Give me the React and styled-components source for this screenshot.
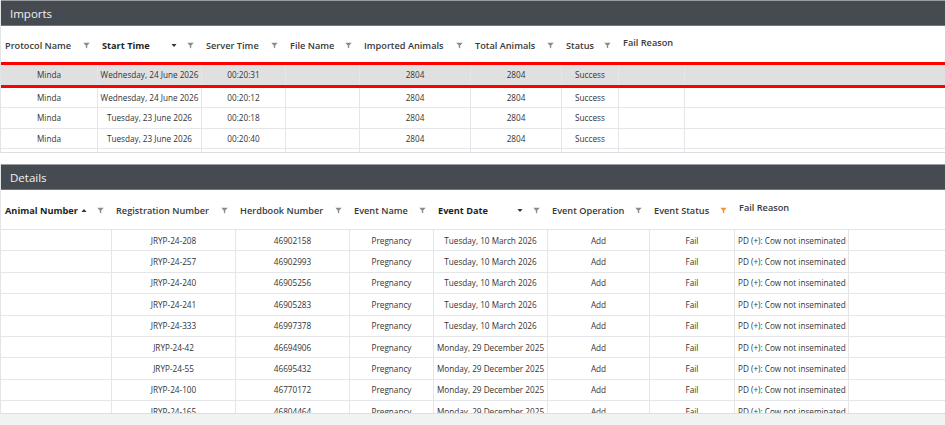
import React from "react";
import styled, { createGlobalStyle } from "styled-components";

const GlobalStyle = createGlobalStyle`
  html, body {
    margin: 0;
    padding: 0;
    background: #f1f3f3;
    font-family: "Open Sans", "Noto Sans", sans-serif;
  }
`;

const importColumns = [
  { title: "Protocol Name", width: 97 },
  { title: "Start Time", width: 104, sort: "desc", strong: true },
  { title: "Server Time", width: 84 },
  { title: "File Name", width: 74 },
  { title: "Imported Animals", width: 111 },
  { title: "Total Animals", width: 91 },
  { title: "Status", width: 57 },
  { title: "Fail Reason", width: 66, noFilter: true },
];

const importRows = [
  ["Minda", "Wednesday, 24 June 2026", "00:20:31", "", "2804", "2804", "Success", ""],
  ["Minda", "Wednesday, 24 June 2026", "00:20:12", "", "2804", "2804", "Success", ""],
  ["Minda", "Tuesday, 23 June 2026", "00:20:18", "", "2804", "2804", "Success", ""],
  ["Minda", "Tuesday, 23 June 2026", "00:20:40", "", "2804", "2804", "Success", ""],
  ["", "", "", "", "", "", "", ""],
];

const detailColumns = [
  { title: "Animal Number", width: 111, sort: "asc", strong: true },
  { title: "Registration Number", width: 124 },
  { title: "Herdbook Number", width: 114 },
  { title: "Event Name", width: 84 },
  { title: "Event Date", width: 114, sort: "desc", strong: true },
  { title: "Event Operation", width: 102 },
  { title: "Event Status", width: 85, active: true },
  { title: "Fail Reason", width: 114, noFilter: true, left: true },
];

const march = "Tuesday, 10 March 2026";
const december = "Monday, 29 December 2025";
const reason = "PD (+): Cow not inseminated";

const detailRows = [
  ["JRYP-24-208", "46902158", march],
  ["JRYP-24-257", "46902993", march],
  ["JRYP-24-240", "46905256", march],
  ["JRYP-24-241", "46905283", march],
  ["JRYP-24-333", "46997378", march],
  ["JRYP-24-42", "46694906", december],
  ["JRYP-24-55", "46695432", december],
  ["JRYP-24-100", "46770172", december],
  ["JRYP-24-165", "46804464", december],
].map(([reg, herd, date]) => ["", reg, herd, "Pregnancy", date, "Add", "Fail", reason]);

const FilterIcon = ({ active }) => (
  <svg width="7" height="7" viewBox="0 0 7 7">
    <path d="M0.3 0.8h6.4L4.2 3.6V6.4L2.8 5.6V3.6z" fill={active ? "#f7941d" : "#8a8a8a"} />
  </svg>
);

const SortIcon = ({ dir }) => (
  <svg width="6" height="5" viewBox="0 0 6 5">
    <path d={dir === "asc" ? "M0.5 4L3 1L5.5 4z" : "M0.5 1L5.5 1L3 4z"} fill="#333" />
  </svg>
);

const DataGrid = ({ title, columns, rows, headerHeight, rowHeight, bodyHeight, selected }) => {
  const template = columns.map((c) => `${c.width}px`).join(" ") + " 1fr";
  return (
    <Panel>
      <TitleBar>{title}</TitleBar>
      <HeaderRow $template={template} $height={headerHeight}>
        {columns.map((c) => (
          <HeaderCell key={c.title} $strong={c.strong}>
            <HeaderLabel $raised={c.noFilter}>{c.title}</HeaderLabel>
            {!c.noFilter && (
              <Icons>
                {c.sort && <SortIcon dir={c.sort} />}
                <FilterIcon active={c.active} />
              </Icons>
            )}
          </HeaderCell>
        ))}
        <HeaderCell />
      </HeaderRow>
      <Body $height={bodyHeight} $outlined={selected === undefined}>
        {rows.map((row, i) => (
          <Row key={i} $template={template} $height={rowHeight} $selected={i === selected}>
            {row.map((value, j) => (
              <Cell key={j} $left={columns[j].left}>
                {value}
              </Cell>
            ))}
            <Cell $last />
          </Row>
        ))}
      </Body>
    </Panel>
  );
};

export default function App() {
  return (
    <>
      <GlobalStyle />
      <Page>
        <DataGrid
          title="Imports"
          columns={importColumns}
          rows={importRows}
          headerHeight={36}
          rowHeight={19.5}
          bodyHeight={90}
          selected={0}
        />
        <Spacer />
        <DataGrid
          title="Details"
          columns={detailColumns}
          rows={detailRows}
          headerHeight={39}
          rowHeight={20.4}
          bodyHeight={183}
        />
      </Page>
    </>
  );
}

const Page = styled.div`
  display: flex;
  flex-direction: column;
  width: 945px;
  height: 425px;
  overflow: hidden;
`;

const Panel = styled.div`
  display: flex;
  flex-direction: column;
  background: #fff;
  border-left: 1px solid #e2e4e6;
`;

const Spacer = styled.div`
  height: 11px;
  background: #fff;
`;

const TitleBar = styled.div`
  height: 24px;
  display: flex;
  align-items: center;
  padding-left: 9px;
  background: #464a51;
  border-top: 1px solid #9a9da1;
  border-bottom: 1px solid #72767c;
  color: #f2f2f2;
  font-size: 11.5px;
`;

const HeaderRow = styled.div`
  display: grid;
  grid-template-columns: ${(p) => p.$template};
  height: ${(p) => p.$height}px;
  background: #fff;
`;

const HeaderCell = styled.div`
  display: flex;
  align-items: center;
  justify-content: space-between;
  padding: 0 8px 0 4px;
  font-size: 9.2px;
  font-weight: ${(p) => (p.$strong ? 700 : 600)};
  color: ${(p) => (p.$strong ? "#1f1f1f" : "#3a3a3a")};
  white-space: nowrap;
  overflow: hidden;
`;

const HeaderLabel = styled.span`
  position: relative;
  top: ${(p) => (p.$raised ? -2 : 1)}px;
`;

const Icons = styled.span`
  display: flex;
  align-items: center;
  gap: 10px;
  position: relative;
  top: 1px;
`;

const Body = styled.div`
  height: ${(p) => p.$height}px;
  overflow: hidden;
  border-top: ${(p) => (p.$outlined ? "1px solid #e2e4e6" : "none")};
  border-bottom: 1px solid #dcdfe2;
`;

const Row = styled.div`
  display: grid;
  grid-template-columns: ${(p) => p.$template};
  height: ${(p) => p.$height}px;
  box-sizing: content-box;
  background: ${(p) => (p.$selected ? "#e0e0e0" : "#fff")};
  border-top: ${(p) => (p.$selected ? "3px solid #ff0000" : "none")};
  border-bottom: ${(p) => (p.$selected ? "3px solid #ff0000" : "1px solid #e4e6e9")};
`;

const Cell = styled.div`
  display: flex;
  align-items: center;
  justify-content: ${(p) => (p.$left ? "flex-start" : "center")};
  padding: 0 3px;
  border-right: ${(p) => (p.$last ? "none" : "1px solid #e4e6e9")};
  font-size: 8.2px;
  color: #333;
  white-space: nowrap;
  overflow: hidden;
`;
